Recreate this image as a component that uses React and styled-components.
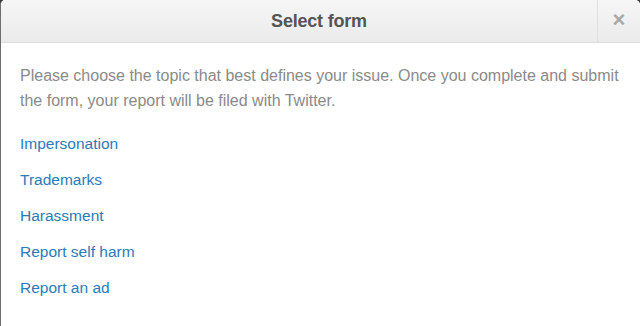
import React from "react";
import styled, { createGlobalStyle } from "styled-components";

const GlobalStyle = createGlobalStyle`
  html, body {
    margin: 0;
    padding: 0;
    background: #3a3a3a;
  }
  body {
    font-family: "Liberation Sans", Arial, sans-serif;
  }
`;

const Modal = styled.div`
  width: 640px;
  height: 326px;
  box-sizing: border-box;
  background: #fff;
  border-left: 1px solid #6e6e6e;
  border-radius: 5px 5px 0 0;
  overflow: hidden;
  display: flex;
  flex-direction: column;
`;

const Header = styled.div`
  height: 43px;
  box-sizing: border-box;
  display: flex;
  align-items: stretch;
  background: linear-gradient(#f6f6f6, #ebebeb);
  border-bottom: 1px solid #dcdcdc;
`;

const Title = styled.h3`
  flex: 1;
  margin: 0;
  padding-left: 40px;
  display: flex;
  align-items: center;
  justify-content: center;
  font-size: 18px;
  font-weight: bold;
  color: #555;
  letter-spacing: -0.2px;
`;

const Close = styled.button`
  width: 43px;
  border: 0;
  border-left: 1px solid #dedede;
  background: transparent;
  color: #a8a8a8;
  font-family: "Liberation Sans", Arial, sans-serif;
  font-size: 22px;
  font-weight: bold;
  padding: 0 0 3px;
  cursor: pointer;
`;

const Body = styled.div`
  padding: 20px 20px 0 19px;
`;

const Intro = styled.p`
  margin: 0 0 21px;
  font-size: 16px;
  line-height: 25px;
  color: #8a8a8a;
`;

const TopicList = styled.ul`
  list-style: none;
  margin: 0;
  padding: 0;
`;

const Topic = styled.li`
  height: 36px;
  line-height: 20px;
  font-size: 15.5px;

  a {
    color: #2b7bb9;
    text-decoration: none;
  }
`;

const topics = [
  "Impersonation",
  "Trademarks",
  "Harassment",
  "Report self harm",
  "Report an ad",
];

export default function App() {
  return (
    <>
      <GlobalStyle />
      <Modal>
        <Header>
          <Title>Select form</Title>
          <Close aria-label="Close">×</Close>
        </Header>
        <Body>
          <Intro>
            Please choose the topic that best defines your issue. Once you
            complete and submit the form, your report will be filed with
            Twitter.
          </Intro>
          <TopicList>
            {topics.map((t) => (
              <Topic key={t}>
                <a href="#">{t}</a>
              </Topic>
            ))}
          </TopicList>
        </Body>
      </Modal>
    </>
  );
}
